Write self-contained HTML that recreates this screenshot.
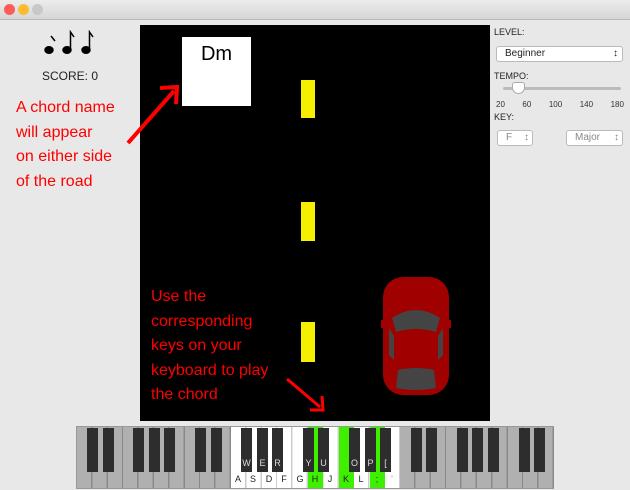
<!DOCTYPE html>
<html><head><meta charset="utf-8"><style>
*{margin:0;padding:0;box-sizing:border-box}
body{width:630px;height:490px;background:#e8e8e8;position:relative;overflow:hidden;font-family:"Liberation Sans",sans-serif}
.a{position:absolute}
.tb{left:0;top:0;width:630px;height:20px;background:linear-gradient(#ececec,#d6d6d6);border-bottom:1px solid #b8b8b8}
.dot{width:11px;height:11px;border-radius:50%;top:4px}
.red{color:#ff0000;font-size:16px;line-height:24.5px}
.bk{background:#2d2d2d;width:11px;height:44px;top:428px}
.wl{top:472px;height:15px;width:14px;font-size:9px;text-align:center;line-height:15px;color:#222}
.bl{font-size:9px;color:#ddd;width:11px;text-align:center;top:458px}
.sel{border:1px solid #bbb;border-radius:3px;background:#fff;font-size:10px;height:16px;line-height:14px;padding-left:8px;color:#222}
</style></head><body>
<div class="a tb"></div>
<div class="a dot" style="left:4px;background:#fc5b57"></div>
<div class="a dot" style="left:18px;background:#fdbc2e"></div>
<div class="a dot" style="left:32px;background:#c8c8c8"></div>

<svg class="a" style="left:44px;top:30px" width="55" height="26">
<g fill="#000" stroke="#000" stroke-width="1.5">
<ellipse cx="5" cy="20" rx="4" ry="3.2"/><path d="M7 6 L11 11" fill="none"/>
<ellipse cx="23" cy="20" rx="4" ry="3.2"/><path d="M26.5 19 V2 L30 7" fill="none"/>
<ellipse cx="42" cy="20" rx="4" ry="3.2"/><path d="M45.5 19 V2 L49 7" fill="none"/>
</g></svg>
<div class="a" style="left:42px;top:69px;font-size:12px;color:#222">SCORE: 0</div>

<div class="a" style="left:140px;top:25px;width:350px;height:396px;background:#000"></div>
<div class="a" style="left:182px;top:37px;width:69px;height:69px;background:#fff;font-size:20px;text-align:center;padding-top:6px">Dm</div>
<div class="a" style="left:301px;top:80px;width:14px;height:38px;background:#f5f000"></div>
<div class="a" style="left:301px;top:202px;width:14px;height:39px;background:#f5f000"></div>
<div class="a" style="left:301px;top:322px;width:14px;height:40px;background:#f5f000"></div>

<svg class="a" style="left:370px;top:270px" width="100" height="130">
<rect x="13" y="7" width="66" height="118" rx="20" fill="#a00000"/>
<rect x="11" y="50" width="70" height="8" fill="#a00000"/>
<path d="M22 48 Q46 32 70 48 L66 62 Q46 56 26 62Z" fill="#444"/>
<path d="M28 100 Q46 96 64 100 L66 118 Q46 122 26 118Z" fill="#444"/>
<path d="M19 58 L24 66 L24 90 L19 85Z M73 58 L68 66 L68 90 L73 85Z" fill="#444"/>
</svg>

<div class="a red" style="left:16px;top:96px">A chord name<br>will appear<br>on either side<br>of the road</div>
<div class="a red" style="left:151px;top:285px">Use the<br>corresponding<br>keys on your<br>keyboard to play<br>the chord</div>
<svg class="a" style="left:0;top:0" width="630" height="490">
<path d="M128 143 L174 91" stroke="#f00" stroke-width="4"/><path d="M160 88 L177 87 L176 104" stroke="#f00" stroke-width="4" fill="none"/>
<path d="M287 379 L320 407" stroke="#f00" stroke-width="3"/><path d="M322 396 L323 410 L310 410" stroke="#f00" stroke-width="3" fill="none"/>
</svg>

<div class="a" style="left:494px;top:27px;font-size:9px;color:#222">LEVEL:</div>
<div class="a sel" style="left:496px;top:46px;width:127px">Beginner<span style="float:right;margin-right:4px">↕</span></div>
<div class="a" style="left:494px;top:71px;font-size:9px;color:#222">TEMPO:</div>
<div class="a" style="left:503px;top:87px;width:118px;height:3px;background:#bbb;border-radius:2px"></div>
<div class="a" style="left:512px;top:82px;width:13px;height:12px;background:#fff;border:1px solid #aaa;border-radius:3px 3px 7px 7px"></div>
<div class="a" style="left:496px;top:100px;font-size:8px;color:#333;width:128px;display:flex;justify-content:space-between"><span>20</span><span>60</span><span>100</span><span>140</span><span>180</span></div>
<div class="a" style="left:494px;top:112px;font-size:9px;color:#222">KEY:</div>
<div class="a sel" style="left:497px;top:130px;width:36px;color:#888">F<span style="float:right;margin-right:3px">↕</span></div>
<div class="a sel" style="left:566px;top:130px;width:57px;color:#888">Major<span style="float:right;margin-right:3px">↕</span></div>

<div class="a" style="left:76px;top:426px;width:478px;height:63px;background:#999"></div>
<div class="a" style="left:77px;top:427px;width:154px;height:61px;background:repeating-linear-gradient(90deg,#b0b0b0 0 14px,#8a8a8a 14px 15.4px)"></div>
<div class="a" style="left:231px;top:427px;width:169px;height:61px;background:repeating-linear-gradient(90deg,#fff 0 14px,#ccc 14px 15.4px)"></div>
<div class="a" style="left:400px;top:427px;width:154px;height:61px;background:repeating-linear-gradient(90deg,#b0b0b0 0 14px,#8a8a8a 14px 15.4px)"></div>
<div class="a" style="left:308px;top:427px;width:15px;height:61px;background:#3ef000"></div>
<div class="a" style="left:339px;top:427px;width:15px;height:61px;background:#3ef000"></div>
<div class="a" style="left:370px;top:427px;width:15px;height:61px;background:#3ef000"></div>

<div class="a bk" style="left:87px"></div><div class="a bk" style="left:103px"></div>
<div class="a bk" style="left:133px"></div><div class="a bk" style="left:149px"></div><div class="a bk" style="left:164px"></div>
<div class="a bk" style="left:195px"></div><div class="a bk" style="left:211px"></div>
<div class="a bk" style="left:241px"></div><div class="a bk" style="left:257px"></div><div class="a bk" style="left:272px"></div>
<div class="a bk" style="left:303px"></div><div class="a bk" style="left:318px"></div>
<div class="a bk" style="left:349px"></div><div class="a bk" style="left:365px"></div><div class="a bk" style="left:380px"></div>
<div class="a bk" style="left:411px"></div><div class="a bk" style="left:426px"></div>
<div class="a bk" style="left:457px"></div><div class="a bk" style="left:472px"></div><div class="a bk" style="left:488px"></div>
<div class="a bk" style="left:519px"></div><div class="a bk" style="left:534px"></div>

<div class="a bl" style="left:241px">W</div><div class="a bl" style="left:257px">E</div><div class="a bl" style="left:272px">R</div>
<div class="a bl" style="left:303px">Y</div><div class="a bl" style="left:318px">U</div>
<div class="a bl" style="left:349px">O</div><div class="a bl" style="left:365px">P</div><div class="a bl" style="left:380px">[</div>

<div class="a wl" style="left:231px">A</div><div class="a wl" style="left:246px">S</div><div class="a wl" style="left:262px">D</div>
<div class="a wl" style="left:277px">F</div><div class="a wl" style="left:293px">G</div><div class="a wl" style="left:308px">H</div>
<div class="a wl" style="left:323px">J</div><div class="a wl" style="left:339px">K</div><div class="a wl" style="left:354px">L</div>
<div class="a wl" style="left:370px">;</div><div class="a wl" style="left:385px;color:#999">'</div>
</body></html>
